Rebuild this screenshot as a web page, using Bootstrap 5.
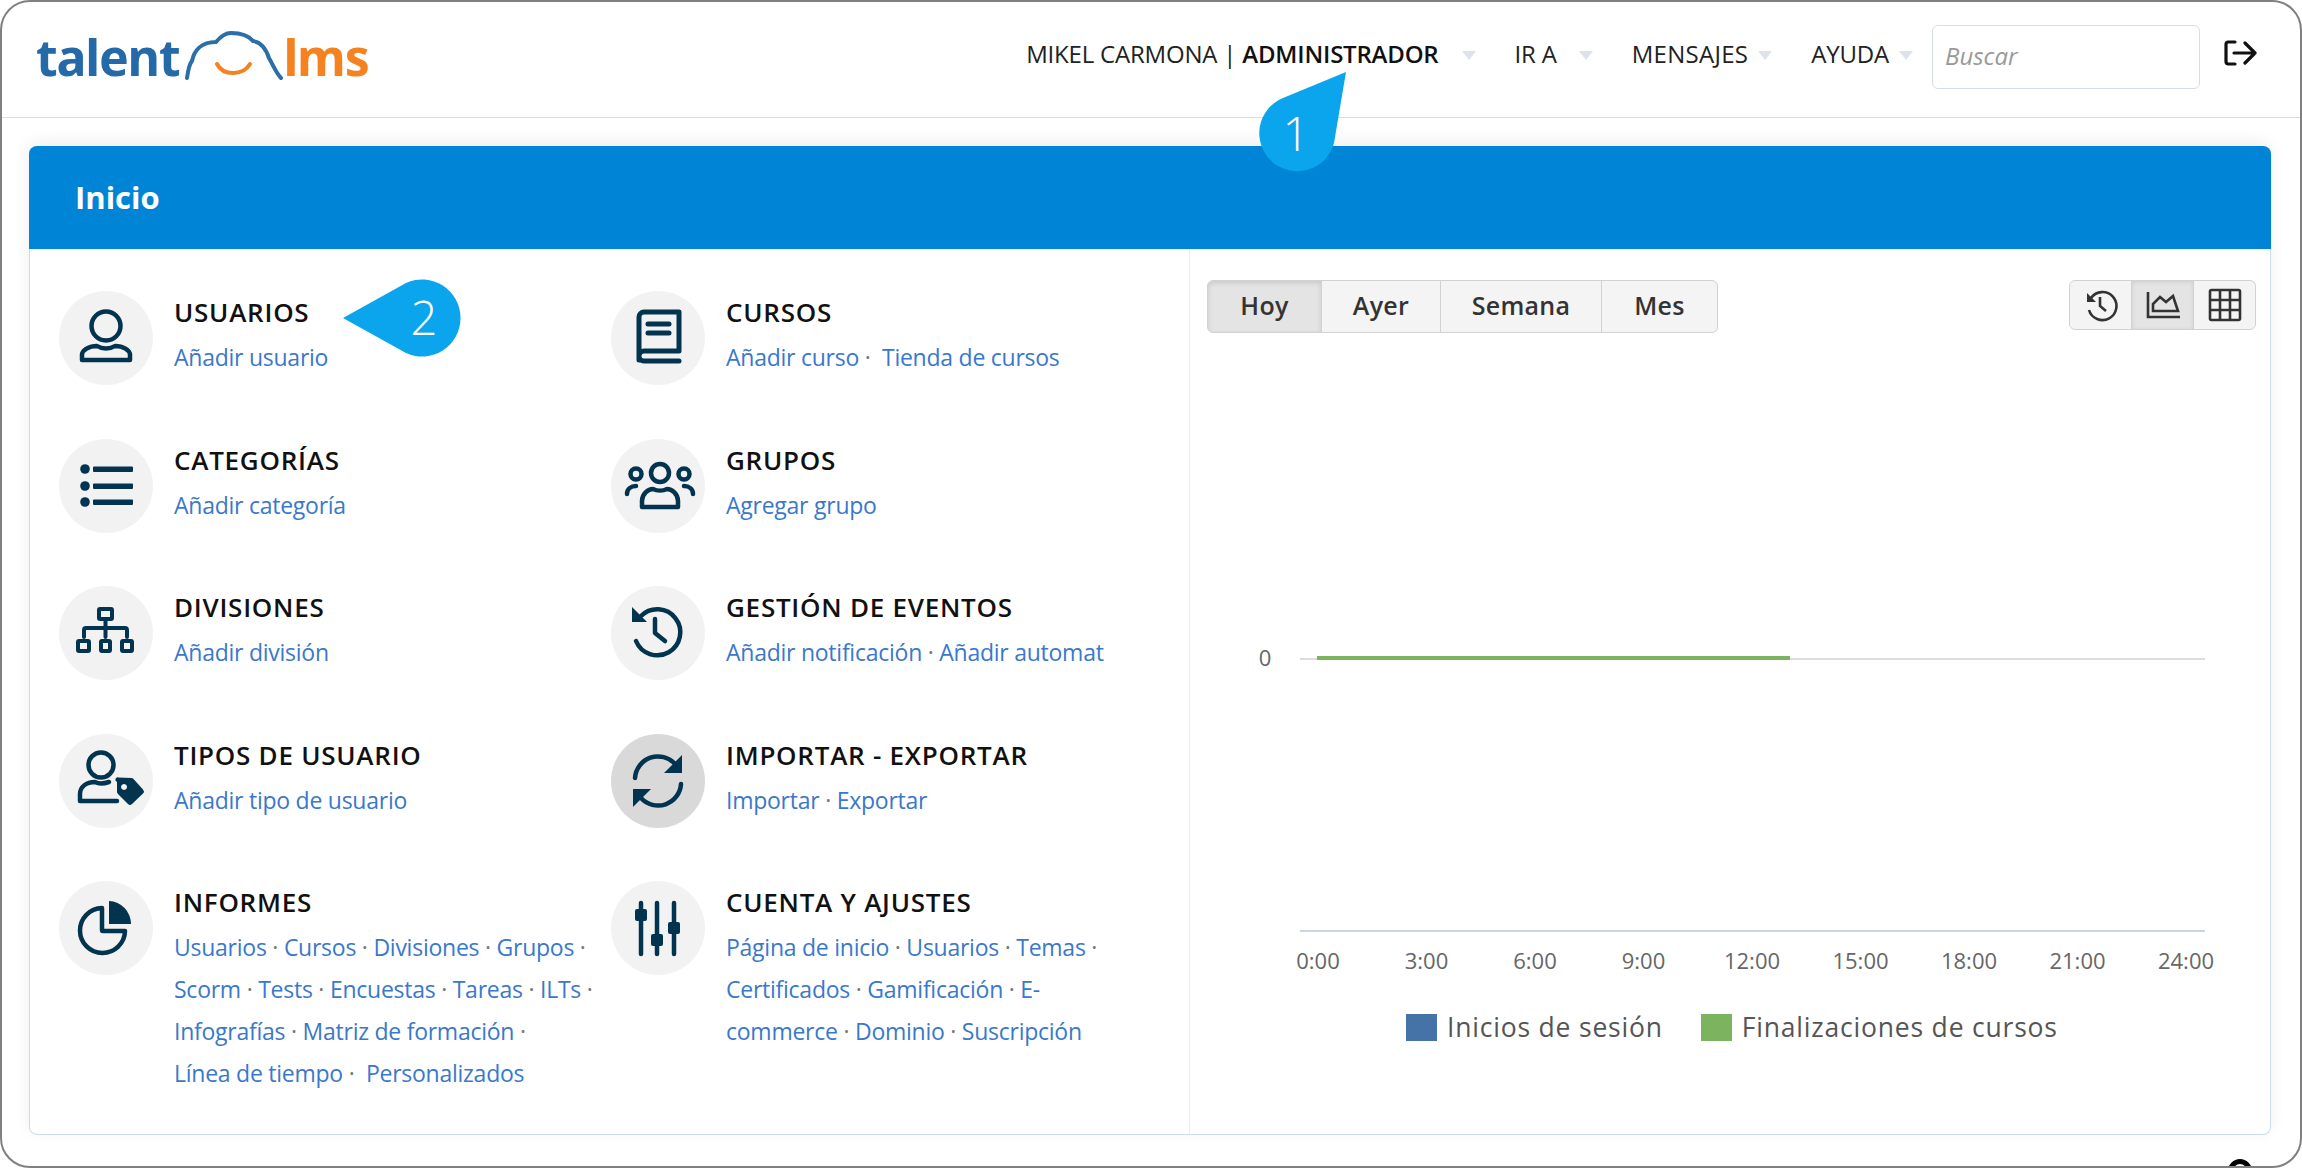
<!DOCTYPE html>
<html lang="es">
<head>
  <meta charset="UTF-8" />
  <meta name="viewport" content="width=device-width, initial-scale=1" />
  <title>Inicio - TalentLMS</title>
  <link rel="stylesheet" href="https://cdn.jsdelivr.net/npm/bootstrap@5.3.3/dist/css/bootstrap.min.css" />
  <style>
    html, body { height: 100%; }
    body {
      margin: 0;
      background: #fff;
      font-family: "Open Sans", "Noto Sans", sans-serif;
      overflow: hidden;
    }
    .app-frame {
      position: relative;
      height: 1168px;
      border: 2px solid #808080;
      border-radius: 30px;
      overflow: hidden;
      background: #fff;
    }
    .top-bar {
      height: 116px;
      padding: 0 43px 5px 34px;
      border-bottom: 1px solid #d5dde5;
    }
    .brand-logo { font-family: "Noto Sans", sans-serif; font-weight: 700; font-size: 50px; line-height: 1; letter-spacing: -1.2px; }
    .brand-talent { color: #2469a8; }
    .brand-lms { color: #f58220; }
    .brand-logo svg { margin: -2px 0 0 6px; }
    .top-link {
      color: #222;
      font-size: 24px;
      letter-spacing: -0.2px;
      padding: 0;
      margin-top: -6px;
      white-space: nowrap;
    }
    .top-link.dropdown-toggle::after {
      border-top: 9px solid #dde3e8;
      border-right: 7.5px solid transparent;
      border-left: 7.5px solid transparent;
      border-bottom: 0;
      margin-left: 10px;
      vertical-align: 3px;
    }
    .top-link.first-link.dropdown-toggle::after { margin-left: 23px; }
    .top-link.short-link.dropdown-toggle::after { margin-left: 22px; }
    .top-link.wide-link { letter-spacing: 0.3px; }
    .top-link strong { font-weight: 600; color: #111; }
    .top-nav { gap: 39px; margin-right: 19px; }
    .search-box {
      width: 268px;
      height: 64px;
      border: 1px solid #d5dde5;
      border-radius: 6px;
      font-size: 24px;
      padding: 0 12px 3px;
    }
    .search-box::placeholder { color: #999; font-style: italic; }
    .logout-btn { margin-left: 24px; line-height: 0; margin-top: -9px; }
    .main-area { padding: 28px 29px 0 27px; }
    .home-panel {
      height: 989px;
      border: 1px solid #cddbe8;
      border-top: 0;
      border-radius: 8px;
      box-shadow: 0 -4px 16px rgba(0, 0, 0, 0.07);
    }
    .panel-head {
      height: 103px;
      margin: 0 -1px;
      background: #0085d6;
      color: #fff;
      font-size: 31px;
      font-weight: 700;
      padding: 0 46px;
      border-radius: 8px 8px 0 0;
    }
    .home-menu {
      width: 1160px;
      flex: none;
      padding: 42px 0 0 29px;
      border-right: 1px solid #e8ecef;
      display: grid;
      grid-template-columns: 552px 1fr;
      grid-auto-rows: 147.5px;
    }
    .menu-item { gap: 21px; }
    .menu-circle {
      flex: none;
      width: 94px;
      height: 94px;
      border-radius: 50%;
      background: #f2f2f2;
    }
    .menu-circle.is-active { background: #d9d9d9; }
    .menu-circle svg { display: block; fill: none; stroke: #02344f; stroke-width: 4.5; stroke-linecap: round; stroke-linejoin: round; }
    .menu-circle svg .solid { fill: #02344f; stroke: none; }
    .menu-title {
      color: #111;
      font-size: 26px;
      font-weight: 600;
      line-height: 31px;
      margin-top: 6px;
      letter-spacing: 0.75px;
      white-space: nowrap;
    }
    .menu-links { margin-top: 8px; font-size: 23px; line-height: 42px; color: #777; width: 420px; letter-spacing: -0.25px; }
    .col-two .menu-links { width: 390px; }
    .menu-links.one-line { white-space: nowrap; }
    .menu-links a { color: #3a78cb; text-decoration: none; white-space: nowrap; }
    .chart-pane { padding: 31px 14px 0 17px; min-width: 0; }
    .range-group .btn {
      height: 53px;
      padding: 0 0 2px;
      background: #f4f4f4;
      border-color: #d2d2d2;
      color: #333;
      font-size: 25px;
      font-weight: 600;
      letter-spacing: 0.3px;
    }
    .range-group .btn.active { background: #e4e4e4; box-shadow: inset 0 2px 5px rgba(0, 0, 0, 0.12); color: #333; }
    .range-hoy { width: 115px; }
    .range-ayer { width: 120px; }
    .range-semana { width: 162px; }
    .range-mes { width: 117px; }
    .view-group .btn {
      width: 63px;
      height: 50px;
      padding: 0;
      background: #f4f4f4;
      border-color: #d2d2d2;
    }
    .view-group .btn.active { background: #e4e4e4; box-shadow: inset 0 1px 4px rgba(0, 0, 0, 0.1); }
    .view-group svg { fill: none; stroke: #333; stroke-width: 2.6; display: inline-block; }
    .chart-svg { display: block; margin: 0 -14px 0 -17px; }
    .chart-svg text { font-family: "Open Sans", sans-serif; font-size: 22px; fill: #666; text-anchor: middle; }
    .chart-legend { gap: 38px; margin-top: 33px; padding-left: 199px; font-size: 26.5px; color: #555; letter-spacing: 0.8px; line-height: 27px; }
    .legend-swatch { width: 31px; height: 27px; margin-right: 10px; }
    .swatch-blue { background: #4572a7; }
    .swatch-green { background: #7cb35f; }
    .tip-bubble { position: absolute; fill: #0aa5ec; }
    .tip-bubble text { fill: #fff; font-family: "Open Sans", sans-serif; font-weight: 300; font-size: 47px; text-anchor: middle; }
    .tip-one { left: 1254px; top: 68px; }
    .tip-two { left: 338px; top: 276px; }
    .help-peek { position: absolute; left: 2226px; top: 1157px; width: 24px; height: 24px; border: 5px solid #000; border-radius: 50%; }
  </style>
</head>
<body>

  <div class="app-frame">
    <header class="top-bar d-flex align-items-center justify-content-between">
      <div class="brand-logo d-flex align-items-center">
        <span class="brand-talent">talent</span>
        <svg width="98" height="50" viewBox="0 0 98 50" fill="none" stroke-linecap="round">
          <path d="M2 47C3 40 4 33 7 30 9 20 16 11 31 11 36 5 41 2 46 2 56 2 63 4 68 10 76 11 81 18 84 27 88 34 91 42 96 47" stroke="#2b6ea8" stroke-width="4"/>
          <path d="M32 33c6 12 26 12 33 0" stroke="#f58220" stroke-width="4"/>
        </svg>
        <span class="brand-lms">lms</span>
      </div>
      <div class="d-flex align-items-center">
        <nav class="top-nav d-flex align-items-center">
          <a class="top-link first-link dropdown-toggle text-decoration-none" href="#">MIKEL CARMONA | <strong>ADMINISTRADOR</strong></a>
          <a class="top-link short-link dropdown-toggle text-decoration-none" href="#">IR A</a>
          <a class="top-link wide-link dropdown-toggle text-decoration-none" href="#">MENSAJES</a>
          <a class="top-link dropdown-toggle text-decoration-none" href="#">AYUDA</a>
        </nav>
        <input class="search-box form-control" type="text" placeholder="Buscar" />
        <a class="logout-btn" href="#">
          <svg width="33" height="26" viewBox="0 0 33 26" fill="none" stroke="#111" stroke-width="3.2" stroke-linecap="round" stroke-linejoin="round">
            <path d="M11 2H4a2.500 2.500 0 0 0-2 2.500v17A2.500 2.500 0 0 0 4 24h7"/>
            <path d="M10 13h21M21 3l10 10-10 10"/>
          </svg>
        </a>
      </div>
    </header>

    <main class="main-area">
      <section class="home-panel d-flex flex-column">
        <div class="panel-head d-flex align-items-center">Inicio</div>
        <div class="d-flex flex-grow-1">
          <div class="home-menu">

            <div class="menu-item d-flex">
              <div class="menu-circle">
                <svg width="94" height="94" viewBox="0 0 94 94"><circle cx="47" cy="35" r="14.500"/><path d="M23 69v-5c0-5 7-9 15-9 3 2 6 2.500 9 2.500s6-.500 9-2.500c8 0 15 4 15 9v5z"/></svg>
              </div>
              <div>
                <div class="menu-title">USUARIOS</div>
                <div class="menu-links"><a href="#">Añadir usuario</a></div>
              </div>
            </div>

            <div class="menu-item col-two d-flex">
              <div class="menu-circle">
                <svg width="94" height="94" viewBox="0 0 94 94" style="stroke-width:5"><path d="M28 69V26a5 5 0 0 1 5-5h35v39H33a5 5 0 0 0-5 5 5 5 0 0 0 5 5h35M37 33h21M37 42h21"/></svg>
              </div>
              <div>
                <div class="menu-title">CURSOS</div>
                <div class="menu-links one-line"><a href="#">Añadir curso</a>&nbsp;· &nbsp;<a href="#">Tienda de cursos</a></div>
              </div>
            </div>

            <div class="menu-item d-flex">
              <div class="menu-circle">
                <svg width="94" height="94" viewBox="0 0 94 94"><circle class="solid" cx="26" cy="30" r="4.800"/><circle class="solid" cx="26" cy="47" r="4.800"/><circle class="solid" cx="26" cy="63" r="4.800"/><rect class="solid" x="34" y="27.500" width="40" height="5.500" rx="1"/><rect class="solid" x="34" y="44.500" width="40" height="5.500" rx="1"/><rect class="solid" x="34" y="60.500" width="40" height="5.500" rx="1"/></svg>
              </div>
              <div>
                <div class="menu-title">CATEGORÍAS</div>
                <div class="menu-links"><a href="#">Añadir categoría</a></div>
              </div>
            </div>

            <div class="menu-item col-two d-flex">
              <div class="menu-circle">
                <svg width="94" height="94" viewBox="0 0 94 94"><circle cx="49" cy="34" r="9"/><circle cx="25" cy="35" r="5.500"/><circle cx="73" cy="35" r="5.500"/><path d="M31 68v-6c0-7 6-12 11-12 4 2 10 2 14 0 5 0 11 5 11 12v6zM16 55c0-5 4-8 9-8M82 55c0-5-4-8-9-8"/></svg>
              </div>
              <div>
                <div class="menu-title">GRUPOS</div>
                <div class="menu-links"><a href="#">Agregar grupo</a></div>
              </div>
            </div>

            <div class="menu-item d-flex">
              <div class="menu-circle">
                <svg width="94" height="94" viewBox="0 0 94 94" style="stroke-width:4"><rect x="40" y="23" width="13" height="10" rx="1"/><path d="M46.500 33v9M25 51v-7a2 2 0 0 1 2-2h39a2 2 0 0 1 2 2v7M46.500 42v9"/><rect x="19" y="55" width="11" height="10" rx="1"/><rect x="42" y="55" width="9" height="10" rx="1"/><rect x="63" y="55" width="10" height="10" rx="1"/></svg>
              </div>
              <div>
                <div class="menu-title">DIVISIONES</div>
                <div class="menu-links"><a href="#">Añadir división</a></div>
              </div>
            </div>

            <div class="menu-item col-two d-flex">
              <div class="menu-circle">
                <svg width="94" height="94" viewBox="0 0 94 94"><path d="M30 30a23 23 0 1 1-5 25" /><path class="solid" d="M21 21v15h15z"/><path d="M44 33v14l10 8"/></svg>
              </div>
              <div>
                <div class="menu-title">GESTIÓN DE EVENTOS</div>
                <div class="menu-links one-line"><a href="#">Añadir notificación</a>&nbsp;· <a href="#">Añadir automat</a></div>
              </div>
            </div>

            <div class="menu-item d-flex">
              <div class="menu-circle">
                <svg width="94" height="94" viewBox="0 0 94 94"><circle cx="42" cy="31" r="12.500"/><path d="M50 48c-3 1-6 1.500-8 1.500-2 0-4-.500-6-1.500-9 0-15 5-15 12v7h37"/><path class="solid" d="M58 48a2 2 0 0 1 1.500-4.500l13 .500a3 3 0 0 1 2 1l9.500 10.500a3 3 0 0 1 0 4L73 70a3 3 0 0 1-4 0L59 60a3 3 0 0 1-1-2zM65 50a3 3 0 1 0 .1 0z"/></svg>
              </div>
              <div>
                <div class="menu-title">TIPOS DE USUARIO</div>
                <div class="menu-links"><a href="#">Añadir tipo de usuario</a></div>
              </div>
            </div>

            <div class="menu-item col-two d-flex">
              <div class="menu-circle is-active">
                <svg width="94" height="94" viewBox="0 0 94 94"><path d="M24 44a23 23 0 0 1 40-14M70 50a23 23 0 0 1-40 14"/><path class="solid" d="M71 21v18H53zM22 73V55h18z"/></svg>
              </div>
              <div>
                <div class="menu-title">IMPORTAR - EXPORTAR</div>
                <div class="menu-links"><a href="#">Importar</a>&nbsp;· <a href="#">Exportar</a></div>
              </div>
            </div>

            <div class="menu-item d-flex">
              <div class="menu-circle">
                <svg width="94" height="94" viewBox="0 0 94 94"><path d="M43 27a22.500 22.500 0 1 0 23 23H44a1 1 0 0 1-1-1z"/><path class="solid" d="M50 20a23 23 0 0 1 22 23H50z"/></svg>
              </div>
              <div>
                <div class="menu-title">INFORMES</div>
                <div class="menu-links"><a href="#">Usuarios</a>&nbsp;· <a href="#">Cursos</a>&nbsp;· <a href="#">Divisiones</a>&nbsp;· <a href="#">Grupos</a>&nbsp;· <a href="#">Scorm</a>&nbsp;· <a href="#">Tests</a>&nbsp;· <a href="#">Encuestas</a>&nbsp;· <a href="#">Tareas</a>&nbsp;· <a href="#">ILTs</a>&nbsp;· <a href="#">Infografías</a>&nbsp;· <a href="#">Matriz de formación</a>&nbsp;· <a href="#">Línea de tiempo</a>&nbsp;· &nbsp;<a href="#">Personalizados</a></div>
              </div>
            </div>

            <div class="menu-item col-two d-flex">
              <div class="menu-circle">
                <svg width="94" height="94" viewBox="0 0 94 94"><path d="M30 22v51M46 22v51M63 22v51"/><rect class="solid" x="24" y="28" width="12" height="12" rx="2"/><rect class="solid" x="40" y="53" width="12" height="12" rx="2"/><rect class="solid" x="57" y="41" width="12" height="12" rx="2"/></svg>
              </div>
              <div>
                <div class="menu-title">CUENTA Y AJUSTES</div>
                <div class="menu-links"><a href="#">Página de inicio</a>&nbsp;· <a href="#">Usuarios</a>&nbsp;· <a href="#">Temas</a>&nbsp;· <a href="#">Certificados</a>&nbsp;· <a href="#">Gamificación</a>&nbsp;· <a href="#">E-</a><wbr><a href="#">commerce</a>&nbsp;· <a href="#">Dominio</a>&nbsp;· <a href="#">Suscripción</a></div>
              </div>
            </div>

          </div>

          <div class="chart-pane flex-grow-1">
            <div class="d-flex justify-content-between align-items-start">
              <div class="btn-group range-group">
                <button class="btn range-hoy active" type="button">Hoy</button>
                <button class="btn range-ayer" type="button">Ayer</button>
                <button class="btn range-semana" type="button">Semana</button>
                <button class="btn range-mes" type="button">Mes</button>
              </div>
              <div class="btn-group view-group">
                <button class="btn" type="button">
                  <svg width="36" height="36" viewBox="0 0 36 36"><path d="M8 11a14 14 0 1 1-2 12"/><path d="M4 6v9h9z" fill="#333" stroke="none"/><path d="M17 10v9l6 5"/></svg>
                </button>
                <button class="btn active" type="button">
                  <svg width="36" height="36" viewBox="0 0 36 36"><path d="M3 5v25h32"/><path d="M8 24V17l7-7 6 5 7-6 5 15z"/></svg>
                </button>
                <button class="btn" type="button">
                  <svg width="36" height="36" viewBox="0 0 36 36"><rect x="3" y="3" width="30" height="30" rx="1.500"/><path d="M13 3v30M23 3v30M3 13h30M3 23h30"/></svg>
                </button>
              </div>
            </div>
            <svg class="chart-svg" width="1081" height="648" viewBox="0 0 1081 648">
              <line x1="110" y1="326" x2="1015" y2="326" stroke="#dcdcdc" stroke-width="2"/>
              <line x1="127" y1="325" x2="600" y2="325" stroke="#7cb35f" stroke-width="4"/>
              <text x="75" y="333">0</text>
              <line x1="110" y1="598" x2="1015" y2="598" stroke="#c8d6e8" stroke-width="2"/>
              <text x="128" y="636">0:00</text>
              <text x="236.500" y="636">3:00</text>
              <text x="345" y="636">6:00</text>
              <text x="453.500" y="636">9:00</text>
              <text x="562" y="636">12:00</text>
              <text x="670.500" y="636">15:00</text>
              <text x="779" y="636">18:00</text>
              <text x="887.500" y="636">21:00</text>
              <text x="996" y="636">24:00</text>
            </svg>
            <div class="chart-legend d-flex align-items-center">
              <div class="d-flex align-items-center"><span class="legend-swatch swatch-blue"></span>Inicios de sesión</div>
              <div class="d-flex align-items-center"><span class="legend-swatch swatch-green"></span>Finalizaciones de cursos</div>
            </div>
          </div>
        </div>
      </section>
    </main>

    <svg class="tip-bubble tip-one" width="96" height="108" viewBox="0 0 96 108"><path d="M90 2 27 28A38 38 0 1 0 78 73Z"/><text x="40" y="81">1</text></svg>
    <svg class="tip-bubble tip-two" width="126" height="84" viewBox="0 0 126 84"><path d="M3 40 66 5A38.500 38.500 0 1 1 66 75Z"/><text x="84" y="57">2</text></svg>
    <div class="help-peek"></div>
  </div>

  <script src="https://cdn.jsdelivr.net/npm/bootstrap@5.3.3/dist/js/bootstrap.bundle.min.js"></script>
</body>
</html>
